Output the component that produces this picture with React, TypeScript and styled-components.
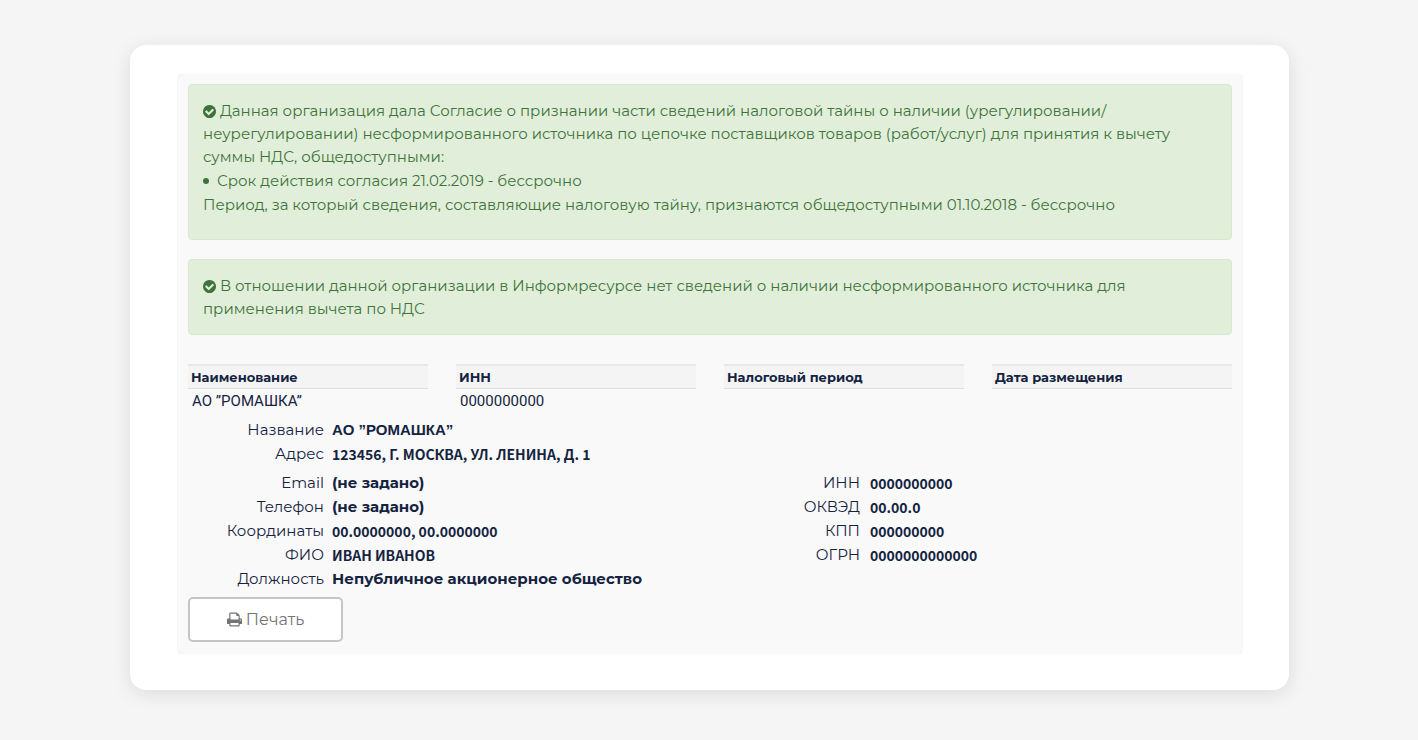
import React from 'react';
import styled, { createGlobalStyle } from 'styled-components';

const sans = `Montserrat, Inter, "Noto Sans", sans-serif`;
const compact = `Roboto, "Liberation Sans", sans-serif`;

const valueFonts = {
  wide: `700 15px/24px ${sans}`,
  name: `700 15px/24px "Liberation Sans", sans-serif`,
  compact: `700 14px/24px "Noto Sans CJK SC", "Liberation Sans", sans-serif`,
};

const GlobalStyle = createGlobalStyle`
  *, *::before, *::after { box-sizing: border-box; }
  body {
    margin: 0;
    background: #f5f5f5;
    color: #14233f;
    font-family: ${sans};
    font-size: 15px;
  }
`;

const Page = styled.main`
  padding: 45px 129px 50px 130px;
`;

const Card = styled.section`
  padding: 29px 46px 36px 47px;
  background: #fff;
  border-radius: 16px;
  box-shadow: 0 4px 20px rgba(0, 0, 0, 0.1);
`;

const Panel = styled.div`
  padding: 9px 10px 11px;
  background: #f9f9f9;
  border: 1px solid #f6f6f6;
  border-radius: 4px;
`;

const Alert = styled.div<{ $roomy?: boolean }>`
  display: grid;
  row-gap: 1px;
  margin-bottom: 19px;
  padding: 14px 14px ${p => (p.$roomy ? 23 : 14)}px;
  background: #e1efda;
  border: 1px solid #d9eacb;
  border-radius: 4px;
  color: #3f733b;
  line-height: 23px;

  p { margin: 0; }
  ul { margin: 0; padding: 0; list-style: none; }
  li { display: flex; align-items: center; gap: 8px; }
  li::before {
    content: '';
    width: 6px;
    height: 6px;
    border-radius: 50%;
    background: currentColor;
  }
`;

const Icon = styled.svg<{ $size: number }>`
  width: ${p => p.$size}px;
  height: ${p => p.$size}px;
  fill: currentColor;
  vertical-align: -2px;
`;

const CheckIcon = () => (
  <Icon $size={13} viewBox="0 128 1536 1536" aria-hidden="true">
    <path d="M1284 734q0-28-18-46l-91-90q-19-19-45-19t-45 19l-408 407-226-226q-19-19-45-19t-45 19l-91 90q-18 18-18 46 0 27 18 45l362 362q19 19 45 19 27 0 46-19l543-543q18-18 18-45zm252 162q0 209-103 385.5t-279.5 279.5-385.5 103-385.5-103-279.5-279.5-103-385.5 103-385.5 279.5-279.5 385.5-103 385.5 103 279.5 279.5 103 385.5z" />
  </Icon>
);

const PrintIcon = () => (
  <Icon $size={15} viewBox="0 64 1664 1664" aria-hidden="true">
    <path d="M384 1536h896v-256h-896v256zm0-640h896v-384h-160q-40 0-68-28t-28-68v-160h-640v640zm1152 64q0-26-19-45t-45-19-45 19-19 45 19 45 45 19 45-19 19-45zm128 0v416q0 13-9.5 22.5t-22.5 9.5h-224v160q0 40-28 68t-68 28h-960q-40 0-68-28t-28-68v-160h-224q-13 0-22.5-9.5t-9.5-22.5v-416q0-79 56.5-135.5t135.5-56.5h64v-544q0-40 28-68t68-28h672q40 0 88 20t76 48l152 152q28 28 48 76t20 88v256h64q79 0 135.5 56.5t56.5 135.5z" />
  </Icon>
);

const TableWrap = styled.div`
  margin: 29px -28px 5px;
`;

const Table = styled.table`
  width: 100%;
  table-layout: fixed;
  border-collapse: separate;
  border-spacing: 28px 0;

  th {
    height: 25px;
    padding: 0 3px;
    background: #f4f4f4;
    border-top: 2px solid #e9e9e9;
    border-bottom: 1px solid #dcdcdc;
    font-size: 13px;
    font-weight: 700;
    line-height: 22px;
    text-align: left;
  }
  td {
    height: 24px;
    padding: 0 4px;
    font-family: ${compact};
    line-height: 24px;
  }
`;

const Columns = styled.div`
  display: grid;
  grid-template-columns: 1fr 1fr;
  margin: 5px 0 6px;
`;

const Details = styled.dl<{ $labels: number; $gap: number }>`
  display: grid;
  grid-template-columns: ${p => p.$labels}px 1fr;
  column-gap: ${p => p.$gap}px;
  grid-auto-rows: 24px;
  align-content: start;
  margin: 0;
  line-height: 24px;

  dt { text-align: right; }
`;

const Value = styled.dd<{ $kind: keyof typeof valueFonts }>`
  margin: 0;
  font: ${p => valueFonts[p.$kind]};
  white-space: nowrap;
`;

const PrintButton = styled.button`
  display: block;
  width: 155px;
  height: 45px;
  padding: 0;
  background: #fff;
  border: 2px solid #c5c5c5;
  border-radius: 5px;
  color: #747474;
  font: 400 16px ${sans};
  cursor: pointer;
`;

type Field = { label: string; value: string; kind?: keyof typeof valueFonts };

const general: Field[] = [
  { label: 'Название', value: 'АО ”РОМАШКА”', kind: 'name' },
  { label: 'Адрес', value: '123456, Г. МОСКВА, УЛ. ЛЕНИНА, Д. 1' },
];

const contacts: Field[] = [
  { label: 'Email', value: '(не задано)', kind: 'wide' },
  { label: 'Телефон', value: '(не задано)', kind: 'wide' },
  { label: 'Координаты', value: '00.0000000, 00.0000000' },
  { label: 'ФИО', value: 'ИВАН ИВАНОВ' },
  { label: 'Должность', value: 'Непубличное акционерное общество', kind: 'wide' },
];

const codes: Field[] = [
  { label: 'ИНН', value: '0000000000' },
  { label: 'ОКВЭД', value: '00.00.0' },
  { label: 'КПП', value: '000000000' },
  { label: 'ОГРН', value: '0000000000000' },
];

const FieldList = ({ fields, labels = 136, gap = 8 }: { fields: Field[]; labels?: number; gap?: number }) => (
  <Details $labels={labels} $gap={gap}>
    {fields.map(f => (
      <React.Fragment key={f.label}>
        <dt>{f.label}</dt>
        <Value $kind={f.kind ?? 'compact'}>{f.value}</Value>
      </React.Fragment>
    ))}
  </Details>
);

export default function App() {
  return (
    <Page>
      <GlobalStyle />
      <Card>
        <Panel>
          <Alert $roomy>
            <p>
              <CheckIcon /> Данная организация дала Согласие о признании части сведений налоговой тайны о наличии (урегулировании/<wbr />неурегулировании) несформированного источника по цепочке поставщиков товаров (работ/услуг) для принятия к вычету суммы НДС, общедоступными:
            </p>
            <ul>
              <li>Срок действия согласия 21.02.2019 - бессрочно</li>
            </ul>
            <p>Период, за который сведения, составляющие налоговую тайну, признаются общедоступными 01.10.2018 - бессрочно</p>
          </Alert>
          <Alert>
            <p>
              <CheckIcon /> В отношении данной организации в Информресурсе нет сведений о наличии несформированного источника для применения вычета по НДС
            </p>
          </Alert>
          <TableWrap>
            <Table>
              <thead>
                <tr>
                  <th scope="col">Наименование</th>
                  <th scope="col">ИНН</th>
                  <th scope="col">Налоговый период</th>
                  <th scope="col">Дата размещения</th>
                </tr>
              </thead>
              <tbody>
                <tr>
                  <td>АО ”РОМАШКА”</td>
                  <td>0000000000</td>
                  <td />
                  <td />
                </tr>
              </tbody>
            </Table>
          </TableWrap>
          <FieldList fields={general} />
          <Columns>
            <FieldList fields={contacts} />
            <FieldList fields={codes} labels={150} gap={10} />
          </Columns>
          <PrintButton type="button">
            <PrintIcon /> Печать
          </PrintButton>
        </Panel>
      </Card>
    </Page>
  );
}
